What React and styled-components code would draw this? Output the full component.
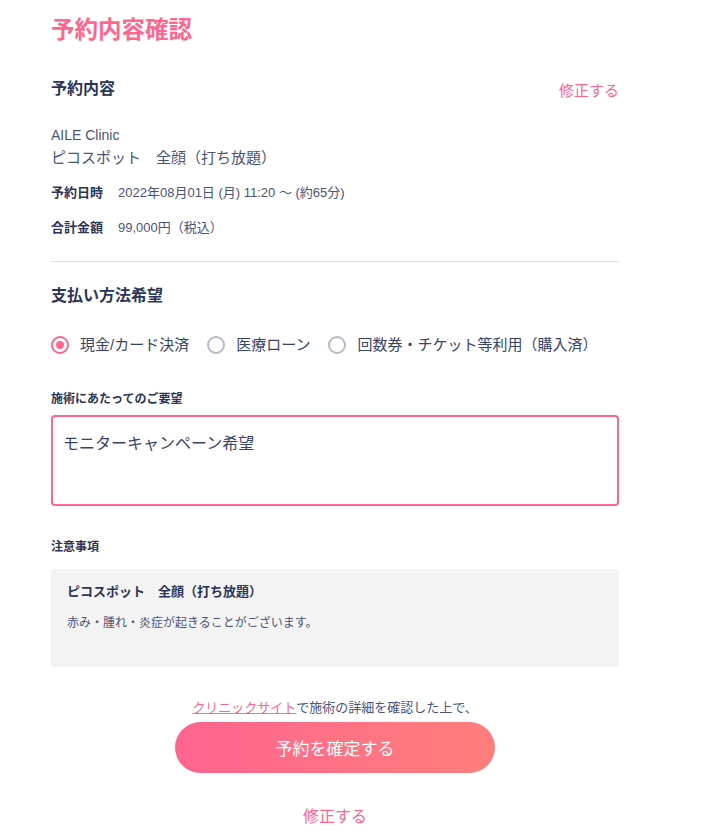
import React, { useState } from 'react';
import styled, { createGlobalStyle } from 'styled-components';

const GlobalStyle = createGlobalStyle`
  body {
    margin: 0;
    background: #ffffff;
    font-family: "Liberation Sans", "Noto Sans CJK JP", sans-serif;
    color: #3a4468;
  }
`;

const methods = ['現金/カード決済', '医療ローン', '回数券・チケット等利用（購入済）'];

const App = () => {
  const [method, setMethod] = useState(0);
  const [note, setNote] = useState('モニターキャンペーン希望');

  return (
    <>
      <GlobalStyle />
      <Page>
        <PageTitle>予約内容確認</PageTitle>

        <SectionHead>
          <Heading>予約内容</Heading>
          <EditLink>修正する</EditLink>
        </SectionHead>

        <ClinicName>AILE Clinic</ClinicName>
        <MenuName>ピコスポット　全顔（打ち放題）</MenuName>
        <InfoRow>
          <InfoLabel>予約日時</InfoLabel>
          <InfoValue>2022年08月01日 (月) 11:20 ～ (約65分)</InfoValue>
        </InfoRow>
        <InfoRow>
          <InfoLabel>合計金額</InfoLabel>
          <InfoValue>99,000円（税込）</InfoValue>
        </InfoRow>

        <Divider />

        <Heading>支払い方法希望</Heading>
        <RadioRow>
          {methods.map((m, i) => (
            <RadioLabel key={m} onClick={() => setMethod(i)}>
              <RadioMark $checked={method === i} />
              {m}
            </RadioLabel>
          ))}
        </RadioRow>

        <FieldLabel>施術にあたってのご要望</FieldLabel>
        <TextArea value={note} onChange={(e) => setNote(e.target.value)} />

        <FieldLabel $top={32}>注意事項</FieldLabel>
        <NoticeBox>
          <NoticeTitle>ピコスポット　全顔（打ち放題）</NoticeTitle>
          <NoticeText>赤み・腫れ・炎症が起きることがございます。</NoticeText>
        </NoticeBox>

        <Footer>
          <FooterNote>
            <SiteLink>クリニックサイト</SiteLink>で施術の詳細を確認した上で、
          </FooterNote>
          <ConfirmButton>予約を確定する</ConfirmButton>
          <BottomLink>修正する</BottomLink>
        </Footer>
      </Page>
    </>
  );
};

const Page = styled.div`
  width: 568px;
  margin-left: 51px;
  padding-top: 15px;
  padding-bottom: 10px;
`;

const PageTitle = styled.h1`
  margin: 0;
  font-size: 23.5px;
  line-height: 30px;
  font-weight: 700;
  color: #ff6690;
`;

const SectionHead = styled.div`
  display: flex;
  justify-content: space-between;
  align-items: flex-end;
  margin-top: 32px;
`;

const Heading = styled.h2`
  margin: 0;
  font-size: 16px;
  line-height: 24px;
  font-weight: 700;
  color: #2b3558;
`;

const EditLink = styled.a`
  font-size: 15px;
  line-height: 20px;
  color: #ff6690;
  cursor: pointer;
`;

const ClinicName = styled.div`
  margin-top: 25px;
  font-size: 14px;
  line-height: 18px;
  color: #4a5477;
`;

const MenuName = styled.div`
  margin-top: 4px;
  font-size: 15px;
  line-height: 20px;
  color: #4a5477;
`;

const InfoRow = styled.div`
  display: flex;
  gap: 15px;
  margin-top: 16px;
  font-size: 13px;
  line-height: 18px;
  & + & {
    margin-top: 17px;
  }
`;

const InfoLabel = styled.span`
  font-weight: 700;
  color: #2b3558;
`;

const InfoValue = styled.span`
  color: #4a5477;
`;

const Divider = styled.hr`
  border: 0;
  border-top: 1px solid #dedede;
  margin: 24px 0 22px;
`;

const RadioRow = styled.div`
  display: flex;
  align-items: center;
  gap: 18px;
  margin-top: 27px;
`;

const RadioLabel = styled.label`
  display: flex;
  align-items: center;
  gap: 11px;
  font-size: 15px;
  line-height: 20px;
  color: #3a4468;
  cursor: pointer;
`;

const RadioMark = styled.span`
  box-sizing: border-box;
  width: 18px;
  height: 18px;
  border-radius: 50%;
  border: 2px solid ${(p) => (p.$checked ? '#ff6690' : '#b6b9c8')};
  display: flex;
  align-items: center;
  justify-content: center;
  &::after {
    content: '';
    width: 8px;
    height: 8px;
    border-radius: 50%;
    background: #ff6690;
    display: ${(p) => (p.$checked ? 'block' : 'none')};
  }
`;

const FieldLabel = styled.div`
  margin-top: ${(p) => p.$top ?? 35}px;
  font-size: 12px;
  line-height: 18px;
  font-weight: 700;
  color: #2b3558;
`;

const TextArea = styled.textarea`
  display: block;
  box-sizing: border-box;
  width: 568px;
  height: 91px;
  margin-top: 7px;
  padding: 16px 10px;
  border: 2px solid #ff6690;
  border-radius: 4px;
  resize: none;
  outline: none;
  font-family: "Liberation Sans", "Noto Sans CJK JP", sans-serif;
  font-size: 16px;
  line-height: 22px;
  color: #3a4468;
`;

const NoticeBox = styled.div`
  margin-top: 13px;
  background: #f3f3f3;
  border-radius: 4px;
  padding: 14px 16px 35px;
`;

const NoticeTitle = styled.div`
  font-size: 13px;
  line-height: 18px;
  font-weight: 700;
  color: #2b3558;
`;

const NoticeText = styled.div`
  margin-top: 13px;
  font-size: 12px;
  line-height: 18px;
  color: #4a5477;
`;

const Footer = styled.div`
  display: flex;
  flex-direction: column;
  align-items: center;
  margin-top: 32px;
`;

const FooterNote = styled.div`
  font-size: 13px;
  line-height: 18px;
  color: #4a5477;
`;

const SiteLink = styled.a`
  color: #ff6690;
  text-decoration: underline;
  cursor: pointer;
`;

const ConfirmButton = styled.button`
  margin-top: 5px;
  width: 320px;
  height: 51px;
  border: 0;
  border-radius: 26px;
  background: linear-gradient(90deg, #ff6490 0%, #ff7f7b 100%);
  color: #ffffff;
  font-family: "Liberation Sans", "Noto Sans CJK JP", sans-serif;
  font-size: 17px;
  cursor: pointer;
`;

const BottomLink = styled.a`
  margin-top: 33px;
  font-size: 16px;
  line-height: 22px;
  color: #ff6690;
  cursor: pointer;
`;

export default App;
